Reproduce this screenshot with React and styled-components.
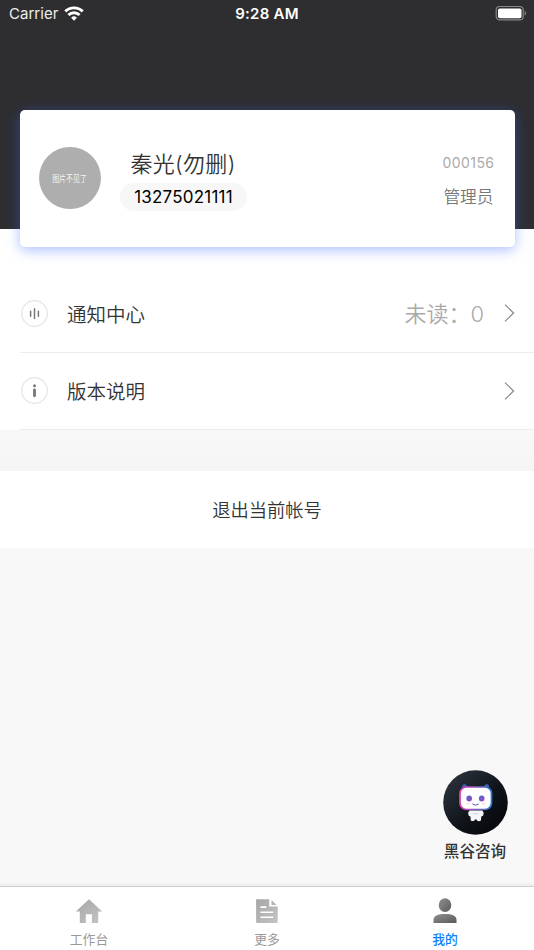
import React from 'react';

import styled, { createGlobalStyle } from 'styled-components';

const GlobalStyle = createGlobalStyle`
  * {
    box-sizing: border-box;
  }
  body {
    margin: 0;
    background-color: #f8f8f8;
    font-family: Inter, 'Noto Sans CJK SC', sans-serif;
    color: #333;
  }
  svg {
    display: block;
    flex-shrink: 0;
  }
`;

const Screen = styled.div`
  height: 950px;
  display: flex;
  flex-direction: column;
  overflow: hidden;
  background-color: #f8f8f8;
`;

const Hero = styled.header`
  height: 228.5px;
  flex-shrink: 0;
  background-color: #2e2e31;
`;

const StatusBar = styled.div`
  height: 28px;
  display: grid;
  grid-template-columns: 1fr auto 1fr;
  align-items: center;
  padding: 0 7px 0 9px;
  color: #fff;
  font-size: 15px;
  line-height: 28px;
`;

const Carrier = styled.div`
  display: flex;
  align-items: center;
  gap: 6px;
  color: #eee;
  letter-spacing: 0.02px;
  svg {
    margin-top: -2px;
  }
`;

const Clock = styled.div`
  margin-right: 2px;
  font-weight: 600;
  letter-spacing: 0.25px;
`;

const Battery = styled.div`
  display: flex;
  justify-content: flex-end;
  svg {
    margin-top: -2px;
  }
`;

const Content = styled.main`
  height: 201.5px;
  flex-shrink: 0;
  background-color: #fff;
`;

const ProfileCard = styled.section`
  position: relative;
  height: 137px;
  margin: -119px 19.5px 0;
  padding: 0 20px 0 19px;
  display: flex;
  align-items: center;
  border-radius: 5px;
  background-color: #fff;
  box-shadow: 0 3px 13px rgba(55, 105, 255, 0.42);
`;

const Avatar = styled.div`
  width: 62px;
  height: 62px;
  display: flex;
  align-items: center;
  justify-content: center;
  border-radius: 50%;
  background-color: #aeaeae;
  color: #f4f4f4;
  font-size: 9px;
  white-space: nowrap;
  span {
    padding-top: 1px;
    transform: scaleX(0.77);
  }
`;

const Person = styled.div`
  flex: 1;
  margin: 1px 0 0 19.5px;
`;

const Name = styled.h1`
  height: 32px;
  margin: 1px 0 3px 10.5px;
  font-size: 22px;
  font-weight: 350;
  line-height: 32px;
  letter-spacing: 0.3px;
`;

const Phone = styled.div`
  width: 127px;
  height: 28px;
  border-radius: 14px;
  background-color: #f7f7f7;
  color: #000;
  font-size: 17px;
  letter-spacing: 0.2px;
  line-height: 28px;
  text-align: center;
`;

const Role = styled.div`
  display: flex;
  flex-direction: column;
  align-items: flex-end;
  gap: 10px;
  margin: 3px 1px 0 0;
  color: #777;
  font-size: 16.7px;
  font-weight: 350;
  line-height: 24px;
  small {
    color: #aaa;
    font-size: 14px;
    font-weight: 400;
    letter-spacing: 0.45px;
    line-height: 24px;
    margin-right: -1px;
  }
`;

const Menu = styled.div`
  padding: 28.5px 0 0 20px;
`;

const MenuRow = styled.div`
  height: 77.5px;
  display: flex;
  align-items: center;
  padding: 0 19px 0 1px;
  border-bottom: 1px solid #ededed;
`;

const MenuLabel = styled.div`
  flex: 1;
  margin: 3px 0 0 19px;
  font-size: 19.5px;
  font-weight: 350;
  line-height: 30px;
`;

const Unread = styled.div`
  margin: 2px 20px 0 0;
  color: #aaa;
  font-size: 22px;
  font-weight: 350;
  line-height: 30px;
`;

const Logout = styled.button`
  height: 77px;
  margin: 0;
  padding-bottom: 2px;
  flex-shrink: 0;
  border: 0;
  background-color: #fff;
  color: #333;
  font-family: inherit;
  font-size: 18.3px;
  font-weight: 350;
`;

const Divider = styled.div`
  height: 41px;
  flex-shrink: 0;
  background: linear-gradient(#f8f8f8, #f5f5f5);
`;

const Support = styled.div`
  margin: auto 26px 20px auto;
  display: flex;
  flex-direction: column;
  align-items: center;
  font-size: 15.6px;
  font-weight: 500;
  line-height: 28px;
  span {
    margin: 3px 1px 0 0;
  }
`;

const TabBar = styled.nav`
  height: 64px;
  flex-shrink: 0;
  display: grid;
  grid-template-columns: repeat(3, 1fr);
  border-top: 1px solid #cfcfcf;
  background-color: #fff;
  box-shadow: 0 -1px 4px rgba(0, 0, 0, 0.08);
`;

const Tab = styled.div`
  display: flex;
  flex-direction: column;
  align-items: center;
  padding-top: 10px;
  color: ${({ $active }) => ($active ? '#0a80ff' : '#999')};
  font-size: 12.8px;
  font-weight: ${({ $active }) => ($active ? 500 : 400)};
  line-height: 20px;
  span {
    margin-top: 5px;
  }
`;

const WifiIcon = () => (
  <svg width="20" height="15" viewBox="0 0 20 15" fill="none" stroke="#fff" strokeWidth="2.9">
    <path d="M1.3 5.4a12.4 12.4 0 0 1 17.4 0M4.4 9a8.1 8.1 0 0 1 11.2 0" />
    <path d="M7.1 11.7a4.2 4.2 0 0 1 5.8 0L10 14.7Z" fill="#fff" stroke="none" />
  </svg>
);

const BatteryIcon = () => (
  <svg width="32" height="16" viewBox="0 0 32 16">
    <rect x="1.2" y="1.5" width="27" height="13.4" rx="3.5" fill="none" stroke="#88888b" strokeWidth="1.2" />
    <rect x="3" y="3.4" width="23.5" height="9.8" rx="1.8" fill="#fff" />
    <path d="M29.7 5.7v5c1.8-.8 1.8-4.2 0-5Z" fill="#88888b" />
  </svg>
);

const NoticeIcon = () => (
  <svg width="27" height="27" viewBox="0 0 27 27" fill="none">
    <circle cx="13.5" cy="13.5" r="12.8" stroke="#e5e5e5" strokeWidth="1.2" />
    <path d="M9.6 11.2v5M13.5 8.8v9.6M17.4 11.2v5" stroke="#777" strokeWidth="1.5" strokeLinecap="round" />
  </svg>
);

const InfoIcon = () => (
  <svg width="27" height="27" viewBox="0 0 27 27" fill="none">
    <circle cx="13.5" cy="13.5" r="12.8" stroke="#e5e5e5" strokeWidth="1.2" />
    <circle cx="13.5" cy="8.7" r="1.5" fill="#777" />
    <path d="M13.5 13v5.8" stroke="#777" strokeWidth="2.8" strokeLinecap="round" />
  </svg>
);

const Chevron = () => (
  <svg width="11" height="18" viewBox="0 0 11 18" fill="none" stroke="#888" strokeWidth="1.15">
    <path d="M1 .7 9.6 9 1 17.3" />
  </svg>
);

const Gradient = ({ id, from, to }) => (
  <defs>
    <linearGradient id={id} x1="0" y1="0" x2="1" y2="1">
      <stop stopColor={from} />
      <stop offset="1" stopColor={to} />
    </linearGradient>
  </defs>
);

const HomeIcon = () => (
  <svg width="28" height="28" viewBox="0 0 28 28">
    <Gradient id="home" from="#a6a6a6" to="#c4c4c4" />
    <path d="M14 2.2.8 14.4h4V26h6v-8.7h6.1V26h6.3V14.4h4Z" fill="url(#home)" />
  </svg>
);

const DocIcon = () => (
  <svg width="28" height="28" viewBox="0 0 28 28">
    <Gradient id="doc" from="#a6a6a6" to="#c4c4c4" />
    <path
      d="M3.8 2.3h12.4v7.2h8.5v15.3q0 1.2-1.2 1.2H4.3q-1.2 0-1.2-1.2V3.1q0-.8.7-.8ZM18.5 3l5 5h-5ZM7.4 9.3v1.7h6V9.3ZM7.4 14.4v1.7h12.8v-1.7ZM7.4 19.4v1.7h12.8v-1.7Z"
      fill="url(#doc)"
      fillRule="evenodd"
    />
  </svg>
);

const PersonIcon = () => (
  <svg width="28" height="28" viewBox="0 0 28 28">
    <Gradient id="person" from="#909090" to="#5b5b5b" />
    <ellipse cx="14" cy="8.1" rx="6.3" ry="6.8" fill="url(#person)" />
    <path d="M2.5 26v-3.3c0-3.8 4.2-5.8 11.5-5.8s11.5 2 11.5 5.8V26Z" fill="url(#person)" />
  </svg>
);

const RobotIcon = () => (
  <svg width="65" height="65" viewBox="0 0 65 65">
    <defs>
      <linearGradient id="night" x1="0" y1="0" x2="1" y2="1">
        <stop stopColor="#303844" />
        <stop offset=".55" stopColor="#10141a" />
        <stop offset="1" stopColor="#020304" />
      </linearGradient>
      <linearGradient id="rim">
        <stop stopColor="#e13cb5" />
        <stop offset=".5" stopColor="#8658c4" />
        <stop offset="1" stopColor="#2478cf" />
      </linearGradient>
      <linearGradient id="eye" x1="0" y1="0" x2="1" y2="1">
        <stop stopColor="#3974d2" />
        <stop offset="1" stopColor="#b73aba" />
      </linearGradient>
    </defs>
    <circle cx="32.5" cy="32.5" r="32.3" fill="url(#night)" />
    <path d="M19.2 18.5v-3q2.2-3.8 5.8 1.5M40.2 17q3.6-5.3 5.8-1.5v3" fill="#3d5fae" />
    <rect x="17" y="17" width="31.5" height="22.5" rx="6.5" fill="#fff" stroke="url(#rim)" strokeWidth="1.7" />
    <ellipse cx="26.2" cy="28.5" rx="2.8" ry="3" fill="url(#eye)" />
    <ellipse cx="38.7" cy="28.5" rx="2.8" ry="3" fill="url(#eye)" />
    <ellipse cx="25" cy="33.6" rx="2" ry=".9" fill="#ffdce5" />
    <ellipse cx="40.7" cy="33.6" rx="2" ry=".9" fill="#ffdce5" />
    <path d="M29.7 34.2q2.8 2.2 5.6 0" fill="none" stroke="#6651ab" strokeWidth="1" strokeLinecap="round" />
    <path
      d="M26.5 40.5h12.8l1.4 2.2-.6 3.1-1.8.8-.4 4q-2 1.1-3.9 0l-.4-1h-1.7l-.5 1q-1.8 1-3.6 0l-.4-4-1.7-.8-.6-3.1Z"
      fill="#f5f6fa"
    />
    <path d="M29.8 43.8h5.5" stroke="#c4c9d8" strokeWidth=".8" />
  </svg>
);

function App() {
  return (
    <>
      <GlobalStyle />
      <Screen>
        <Hero>
          <StatusBar>
            <Carrier>
              Carrier
              <WifiIcon />
            </Carrier>
            <Clock>9:28 AM</Clock>
            <Battery>
              <BatteryIcon />
            </Battery>
          </StatusBar>
        </Hero>
        <Content>
          <ProfileCard>
            <Avatar>
              <span>图片不见了</span>
            </Avatar>
            <Person>
              <Name>秦光(勿删)</Name>
              <Phone>13275021111</Phone>
            </Person>
            <Role>
              <small>000156</small>
              管理员
            </Role>
          </ProfileCard>
          <Menu>
            <MenuRow>
              <NoticeIcon />
              <MenuLabel>通知中心</MenuLabel>
              <Unread>未读：0</Unread>
              <Chevron />
            </MenuRow>
            <MenuRow>
              <InfoIcon />
              <MenuLabel>版本说明</MenuLabel>
              <Chevron />
            </MenuRow>
          </Menu>
        </Content>
        <Divider />
        <Logout>退出当前帐号</Logout>
        <Support>
          <RobotIcon />
          <span>黑谷咨询</span>
        </Support>
        <TabBar>
          <Tab>
            <HomeIcon />
            <span>工作台</span>
          </Tab>
          <Tab>
            <DocIcon />
            <span>更多</span>
          </Tab>
          <Tab $active>
            <PersonIcon />
            <span>我的</span>
          </Tab>
        </TabBar>
      </Screen>
    </>
  );
}

export default App;
